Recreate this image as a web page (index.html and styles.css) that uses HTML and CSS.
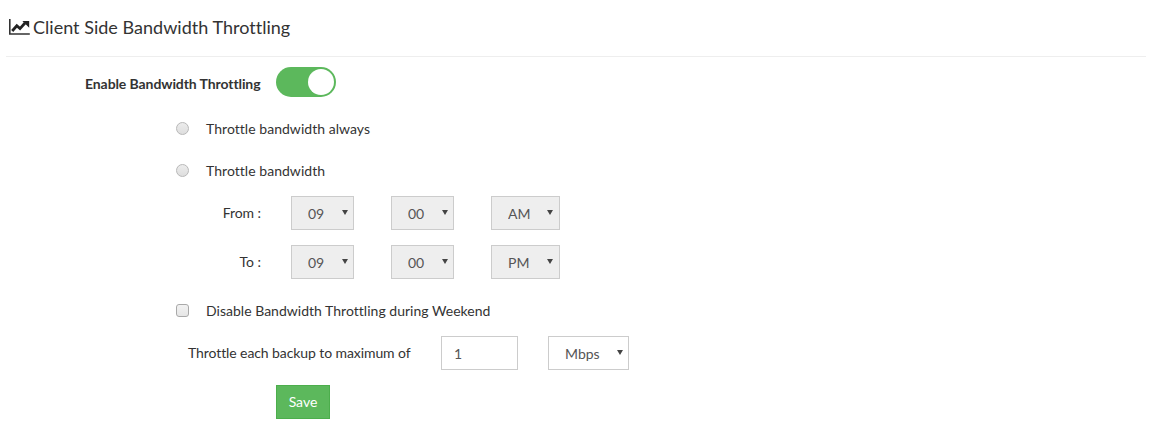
FILE: index.html
```html
<!DOCTYPE html>
<html lang="en">
<head>
<meta charset="utf-8">
<title>Client Side Bandwidth Throttling</title>
<link rel="stylesheet" href="styles.css">
</head>
<body>
<div class="panel">
  <h2 class="title">
    <svg class="title-icon" width="21" height="16" viewBox="0 0 21 16"><path d="M0.8 0v15h20" fill="none" stroke="#333" stroke-width="1.6"/><path d="M3.2 12l4.6-5.2 3.2 2.8 5-5.6" fill="none" stroke="#222" stroke-width="2.8"/><path d="M13.4 2h6.8v6.8z" fill="#222"/></svg>
    <span>Client Side Bandwidth Throttling</span>
  </h2>
  <form class="form">
    <div class="row row-enable">
      <label class="enable-label">Enable Bandwidth Throttling</label>
      <span class="toggle"><span class="knob"></span></span>
    </div>
    <label class="option option-first"><input class="radio" type="radio" name="mode"><span>Throttle bandwidth always</span></label>
    <label class="option option-second"><input class="radio" type="radio" name="mode"><span>Throttle bandwidth</span></label>
    <div class="time-row time-from">
      <span class="time-label">From :</span>
      <span class="sel-wrap wrap-num"><select class="sel"><option>09</option></select></span>
      <span class="sel-wrap wrap-num"><select class="sel"><option>00</option></select></span>
      <span class="sel-wrap wrap-ampm"><select class="sel"><option>AM</option></select></span>
    </div>
    <div class="time-row time-to">
      <span class="time-label">To :</span>
      <span class="sel-wrap wrap-num"><select class="sel"><option>09</option></select></span>
      <span class="sel-wrap wrap-num"><select class="sel"><option>00</option></select></span>
      <span class="sel-wrap wrap-ampm"><select class="sel"><option>PM</option></select></span>
    </div>
    <label class="option option-weekend"><input class="check" type="checkbox"><span>Disable Bandwidth Throttling during Weekend</span></label>
    <div class="limit-row">
      <span class="limit-label">Throttle each backup to maximum of</span>
      <input class="limit-input" type="text" value="1">
      <span class="sel-wrap wrap-unit"><select class="sel sel-unit"><option>Mbps</option></select></span>
    </div>
    <button class="save" type="button">Save</button>
  </form>
</div>
</body>
</html>
```

FILE: styles.css
```css
* { box-sizing: border-box; }
html, body { margin: 0; padding: 0; background: #fff; }
body {
  width: 1166px;
  height: 435px;
  overflow: hidden;
  font-family: Lato, "Liberation Sans", sans-serif;
  font-size: 14px;
  color: #333;
}
.panel { width: 1140px; margin-left: 6px; }
.title {
  display: flex;
  align-items: center;
  gap: 3px;
  height: 57px;
  margin: 0;
  padding: 0 0 2px 3px;
  border-bottom: 1px solid #eee;
  font-size: 18px;
  font-weight: 400;
  letter-spacing: 0.02px;
}
.title-icon { flex: none; }
.form { display: flex; flex-direction: column; align-items: flex-start; }
.row-enable { display: flex; align-items: center; height: 30px; margin-top: 10px; padding-left: 79px; }
.enable-label { width: 191px; padding-top: 2px; font-weight: 700; letter-spacing: -0.09px; }
.toggle {
  display: flex;
  align-items: center;
  justify-content: flex-end;
  width: 60px;
  height: 30px;
  padding: 2px;
  border-radius: 15px;
  background: #5cb85c;
}
.knob { width: 26px; height: 26px; border-radius: 50%; background: #fff; }
.option { display: flex; align-items: center; height: 20px; padding-left: 169px; letter-spacing: 0.04px; }
.option-first { margin-top: 21px; }
.option-second { margin-top: 22px; }
.option-weekend { margin-top: 21px; letter-spacing: 0.02px; }
.radio, .check {
  appearance: none;
  flex: none;
  width: 13px;
  height: 13px;
  margin: 1px 17px 0 1px;
  border: 1px solid #b8b8b8;
  background: linear-gradient(#ececec, #dedede);
}
.radio { border-radius: 50%; }
.check { border-radius: 3px; background: linear-gradient(#f2f2f2, #e6e6e6); border-color: #a9a9a9; }
.time-row { display: flex; align-items: center; height: 34px; padding-left: 215px; }
.time-from { margin-top: 16px; }
.time-to { margin-top: 15px; }
.time-label { width: 40px; margin-right: 30px; padding-bottom: 2px; text-align: right; letter-spacing: -0.05px; }
.sel-wrap { position: relative; display: block; height: 34px; }
.sel-wrap::after {
  content: "";
  position: absolute;
  top: 14px;
  right: 6px;
  border-style: solid;
  border-width: 5px 3px 0;
  border-color: #444 transparent transparent;
  pointer-events: none;
}
.wrap-num { width: 63px; margin-right: 37px; }
.wrap-ampm { width: 69px; }
.wrap-ampm::after { right: 7px; }
.wrap-unit { width: 81px; }
.sel {
  appearance: none;
  display: block;
  width: 100%;
  height: 34px;
  padding: 0 0 0 16px;
  border: 1px solid #ccc;
  border-radius: 0;
  background-color: #eee;
  font: 14px Lato, "Liberation Sans", sans-serif;
  color: #555;
}
.limit-row { display: flex; align-items: center; height: 34px; margin-top: 16px; padding-left: 182px; }
.limit-label { width: 253px; padding-bottom: 2px; letter-spacing: -0.09px; }
.limit-input {
  width: 77px;
  height: 34px;
  margin-right: 30px;
  padding: 0 12px;
  border: 1px solid #ccc;
  font: 14px Lato, "Liberation Sans", sans-serif;
  color: #555;
}
.sel-unit { background-color: #fff; }
.save {
  width: 54px;
  height: 34px;
  margin: 15px 0 0 270px;
  padding: 0 0 2px;
  border: 1px solid #4cae4c;
  border-radius: 0;
  background: #5cb85c;
  color: #fff;
  font: 14px Lato, "Liberation Sans", sans-serif;
}
```
